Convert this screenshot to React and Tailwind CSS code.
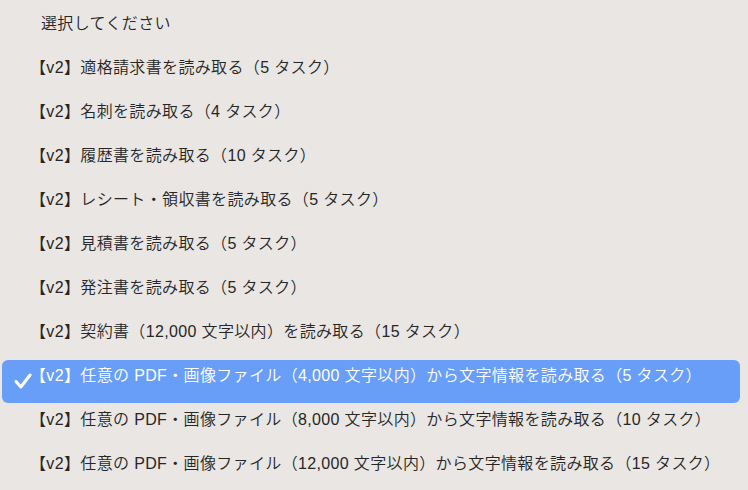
const items = [
  '選択してください',
  '【v2】適格請求書を読み取る（5 タスク）',
  '【v2】名刺を読み取る（4 タスク）',
  '【v2】履歴書を読み取る（10 タスク）',
  '【v2】レシート・領収書を読み取る（5 タスク）',
  '【v2】見積書を読み取る（5 タスク）',
  '【v2】発注書を読み取る（5 タスク）',
  '【v2】契約書（12,000 文字以内）を読み取る（15 タスク）',
  '【v2】任意の PDF・画像ファイル（4,000 文字以内）から文字情報を読み取る（5 タスク）',
  '【v2】任意の PDF・画像ファイル（8,000 文字以内）から文字情報を読み取る（10 タスク）',
  '【v2】任意の PDF・画像ファイル（12,000 文字以内）から文字情報を読み取る（15 タスク）',
];

const SELECTED = 8;

function Check() {
  return (
    <svg width="18" height="16" viewBox="0 0 18 16" className="absolute left-[12px] top-[13px]">
      <path d="M2 8.5 L6.8 14 L16 2" fill="none" stroke="white" strokeWidth="3" strokeLinecap="round" strokeLinejoin="round" />
    </svg>
  );
}

export default function App() {
  return (
    <div
      className="h-[490px] w-[748px] overflow-hidden bg-[#e9e6e4] pt-2 text-[16px] font-[350] tracking-[0.35px] text-[#262626]"
      style={{ fontFamily: '"Liberation Sans", "Noto Sans CJK JP", sans-serif' }}
    >
      {items.map((label, i) => {
        const active = i === SELECTED;
        return (
          <div key={i} className="h-[44px]">
            <div
              className={
                active
                  ? 'relative ml-[2px] mr-[8px] h-[43px] rounded-[6px] bg-[#689ef8] text-white'
                  : 'relative ml-[2px] mr-[8px] h-[43px]'
              }
            >
              {active && <Check />}
              <div className={i === 0 ? 'pl-[39px] leading-[32px]' : 'pl-[28px] leading-[32px]'}>{label}</div>
            </div>
          </div>
        );
      })}
    </div>
  );
}
